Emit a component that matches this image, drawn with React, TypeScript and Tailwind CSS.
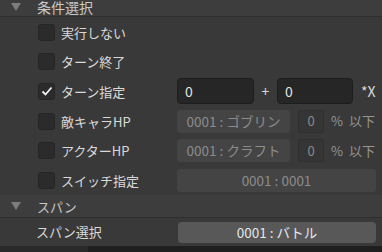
const font = { fontFamily: '"Noto Sans CJK JP", "Noto Sans", sans-serif' };

function Tri() {
  return (
    <svg width="10" height="8" viewBox="0 0 10 8" className="ml-[11px] shrink-0">
      <polygon points="0,0 10,0 5,8" fill="#7d7d7d" />
    </svg>
  );
}

function Check({ on }: { on?: boolean }) {
  return (
    <div className="w-[17px] h-[17px] shrink-0 rounded-[3px] bg-[#2b2b2b] border border-[#252525] flex items-center justify-center">
      {on && (
        <svg width="12" height="12" viewBox="0 0 12 12">
          <path d="M1.5 6.5 L4.5 9.5 L10.5 2.5" fill="none" stroke="#f0f0f0" strokeWidth="1.8" />
        </svg>
      )}
    </div>
  );
}

function Row({ label, on, h, children }: { label: string; on?: boolean; h: string; children?: React.ReactNode }) {
  return (
    <div className={`flex items-center ${h}`}>
      <div className="w-[177px] shrink-0 flex items-center pl-[38px] gap-[6px]">
        <Check on={on} />
        <span className="text-[13px] text-[#d9d9d9] leading-none">{label}</span>
      </div>
      <div className="flex-1 pr-[6px] flex items-center">{children}</div>
    </div>
  );
}

function HpControls({ name }: { name: string }) {
  return (
    <>
      <div className="w-[113px] h-[23px] rounded-[3px] bg-[#444444] flex items-center justify-center text-[13.5px] text-[#8c8c8c]">
        {name}
      </div>
      <div className="ml-[8px] w-[26px] h-[23px] rounded-[3px] bg-[#353535] border border-[#2f2f2f] flex items-center justify-center text-[13px] text-[#8a8a8a]">
        0
      </div>
      <span className="ml-[7px] text-[13px] text-[#959595]">%</span>
      <span className="ml-[6px] text-[13px] text-[#959595]">以下</span>
    </>
  );
}

export default function App() {
  return (
    <div className="w-[382px] h-[252px] overflow-hidden bg-[#393939]" style={font}>
      <div className="h-[20px] -mt-[3px] bg-[#3d3d3d] border-b border-[#2f2f2f] flex items-center">
        <Tri />
        <span className="ml-[16px] text-[14px] text-[#c8c8c8] leading-none">条件選択</span>
      </div>

      <div>
        <Row label="実行しない" h="h-[30px]" />
        <Row label="ターン終了" h="h-[29px]" />
        <Row label="ターン指定" on h="h-[30px]">
          <div className="w-[77px] h-[26px] rounded-[4px] bg-[#262626] border border-[#1d1d1d] flex items-center pl-[7px] text-[14px] text-[#e2e2e2]">
            0
          </div>
          <span className="w-[23px] text-center text-[14px] text-[#d8d8d8]">+</span>
          <div className="w-[76px] h-[26px] rounded-[4px] bg-[#262626] border border-[#1d1d1d] flex items-center pl-[7px] text-[14px] text-[#e2e2e2]">
            0
          </div>
          <span className="ml-[8px] text-[14px] text-[#dcdcdc]">*X</span>
        </Row>
        <Row label="敵キャラHP" h="h-[30px]">
          <HpControls name="0001 : ゴブリン" />
        </Row>
        <Row label="アクターHP" h="h-[29px]">
          <HpControls name="0001 : クラフト" />
        </Row>
        <Row label="スイッチ指定" h="h-[30px]">
          <div className="w-full h-[23px] rounded-[3px] bg-[#444444] flex items-center justify-center text-[13.5px] text-[#8c8c8c]">
            0001 : 0001
          </div>
        </Row>
      </div>

      <div className="h-[23px] bg-[#3d3d3d] border-b border-[#2f2f2f] flex items-center">
        <Tri />
        <span className="ml-[16px] text-[13px] text-[#c8c8c8] leading-none">スパン</span>
      </div>

      <div className="h-[28px] flex items-center">
        <div className="w-[178px] shrink-0 pl-[36px] text-[13px] text-[#d9d9d9]">スパン選択</div>
        <div className="flex-1 pr-[6px]">
          <div className="h-[21px] rounded-[4px] bg-[#585858] flex items-center justify-center text-[13.5px] text-[#e6e6e6]">
            0001 : バトル
          </div>
        </div>
      </div>

      <div className="h-[10px] bg-[#1f1f1f] flex">
        <div className="w-[88px] bg-[#2a2a2a]" />
      </div>
    </div>
  );
}
